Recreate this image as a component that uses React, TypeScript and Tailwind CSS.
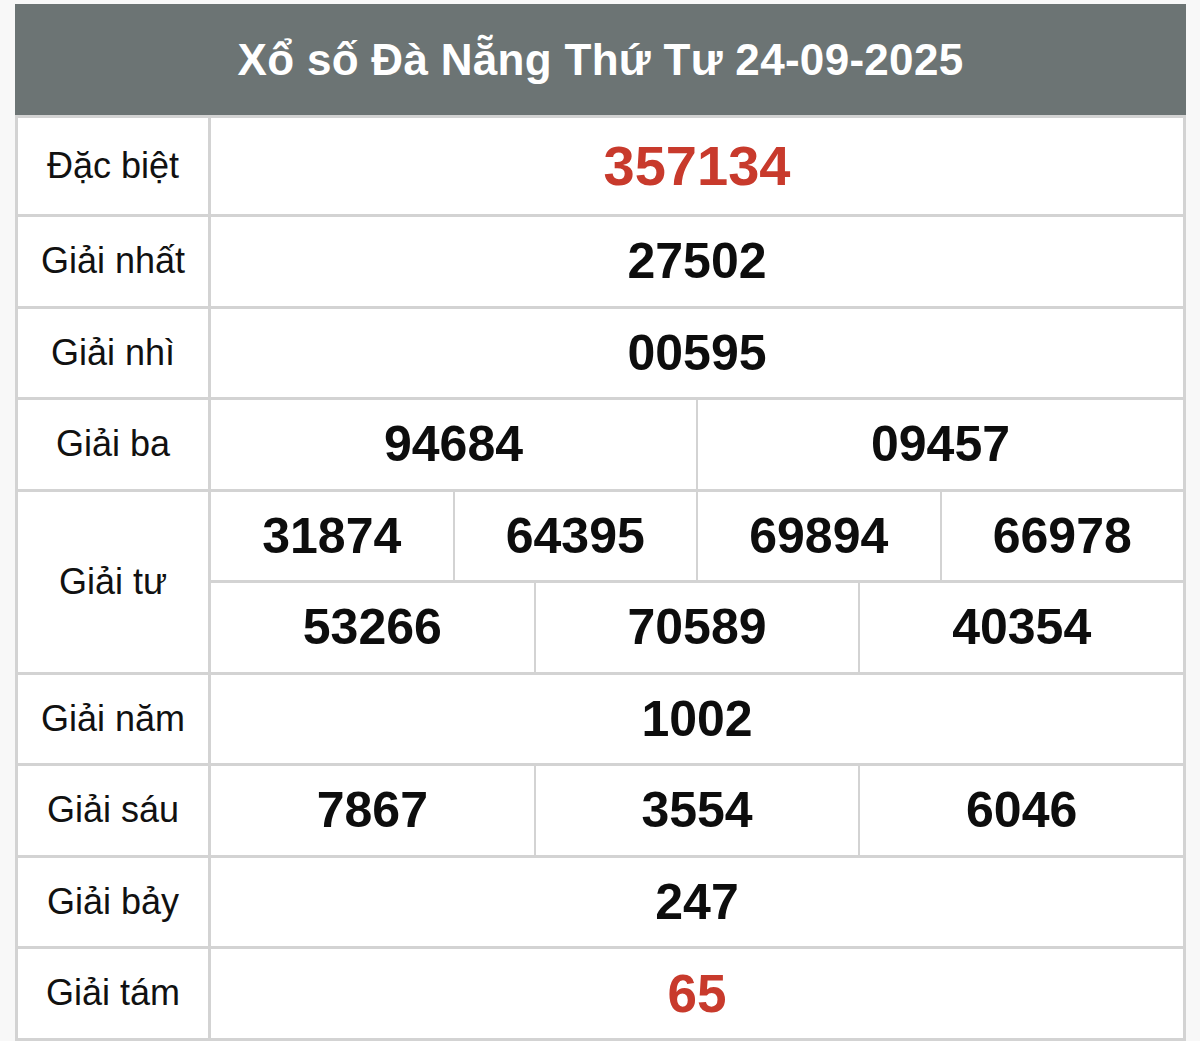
import React from "react";

type Row = {
  label: string;
  lines: string[][];
  red?: boolean;
  big?: boolean;
};

const ROWS: Row[] = [
  { label: "Đặc biệt", lines: [["357134"]], red: true, big: true },
  { label: "Giải nhất", lines: [["27502"]] },
  { label: "Giải nhì", lines: [["00595"]] },
  { label: "Giải ba", lines: [["94684", "09457"]] },
  {
    label: "Giải tư",
    lines: [
      ["31874", "64395", "69894", "66978"],
      ["53266", "70589", "40354"],
    ],
  },
  { label: "Giải năm", lines: [["1002"]] },
  { label: "Giải sáu", lines: [["7867", "3554", "6046"]] },
  { label: "Giải bảy", lines: [["247"]] },
  { label: "Giải tám", lines: [["65"]], red: true },
];

function NumberLine({ nums, row, last }: { nums: string[]; row: Row; last: boolean }) {
  const size = row.big ? "text-[56px]" : row.red ? "text-[53px]" : "text-[50px]";
  const color = row.red ? "text-[#c83a2c]" : "text-[#0d0d0d]";
  // border-box: a line with its own bottom border needs the extra 3px
  const height = row.big ? "h-[96px]" : last ? "h-[88.5px]" : "h-[91.5px] border-b-[3px] border-[#d3d3d3]";
  return (
    <div className={`flex ${height}`}>
      {nums.map((n, i) => (
        <div
          key={i}
          className={`flex-1 flex items-center justify-center font-bold leading-none ${size} ${color} ${
            i < nums.length - 1 ? "border-r-2 border-[#d3d3d3]" : ""
          }`}
        >
          {n}
        </div>
      ))}
    </div>
  );
}

export default function App() {
  return (
    <div
      className="min-h-screen w-full bg-[#f8f8f8] pt-[4px]"
      style={{ fontFamily: '"Liberation Sans", Arial, sans-serif' }}
    >
      <div className="ml-[15px] w-[1171px]">
        <div className="h-[111px] bg-[#6c7474] flex items-center justify-center text-white font-bold text-[44px] tracking-[0.3px]">
          Xổ số Đà Nẵng Thứ Tư 24-09-2025
        </div>
        <div className="bg-white border-l-[3px] border-r-[3px] border-t-[3px] border-[#d3d3d3]">
          {ROWS.map((row, idx) => (
            <div key={idx} className="flex border-b-[3px] border-[#d3d3d3]">
              <div className="w-[193px] shrink-0 flex items-center justify-center text-[36px] text-[#111] border-r-[3px] border-[#d3d3d3]">
                {row.label}
              </div>
              <div className="flex-1 flex flex-col">
                {row.lines.map((nums, j) => (
                  <NumberLine key={j} nums={nums} row={row} last={j === row.lines.length - 1} />
                ))}
              </div>
            </div>
          ))}
        </div>
      </div>
    </div>
  );
}
